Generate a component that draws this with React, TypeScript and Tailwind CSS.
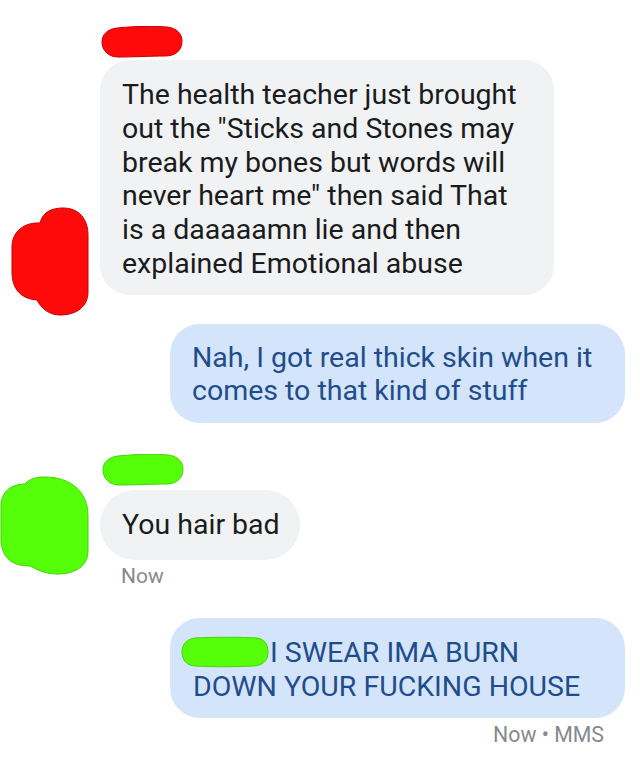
const Blob = ({ d, w, h, fill, stroke }: { d: string; w: number; h: number; fill: string; stroke: string }) => (
  <svg width={w} height={h} viewBox={`0 0 ${w} ${h}`} className="block">
    <path d={d} fill={fill} stroke={stroke} strokeWidth="1" />
  </svg>
);

const RED = "#ff0a0a";
const RED_EDGE = "#c80000";
const GREEN = "#55ff0a";
const GREEN_EDGE = "#44d400";

const NamePill = ({ fill, edge }: { fill: string; edge: string }) => (
  <Blob
    w={82}
    h={32}
    fill={fill}
    stroke={edge}
    d="M16,2 C35,0 55,0 66,1 C76,2 81,8 81,15 C81,24 75,30 64,30 C50,30 35,31 17,31 C7,31 1,24 1,16 C1,8 7,3 16,2 Z"
  />
);

export default function App() {
  return (
    <div className="w-[640px] h-[774px] overflow-hidden bg-white pt-[26px] font-['Roboto','Liberation_Sans',sans-serif] flex flex-col">
      {/* incoming #1 */}
      <div className="flex">
        <div className="w-[100px] shrink-0 relative">
          <div className="absolute left-[11px] top-[181px]">
            <Blob
              w={78}
              h={109}
              fill={RED}
              stroke={RED_EDGE}
              d="M29,16 C32,4 42,1 52,1 C68,1 77,12 77,28 L77,85 C77,100 65,108 49,108 C38,108 30,101 26,93 C12,92 1,84 1,65 L1,40 C1,24 14,15 29,16 Z"
            />
          </div>
        </div>
        <div className="flex flex-col">
          <div className="ml-px">
            <NamePill fill={RED} edge={RED_EDGE} />
          </div>
          <div className="mt-[2px] w-[454px] rounded-[30px] bg-[#f1f2f4] px-[22px] pt-[18px] pb-[14px] text-[28.5px] leading-[33.75px] text-[#1a1b1d] whitespace-nowrap">
            The health teacher just brought
            <br />
            out the "Sticks and Stones may
            <br />
            break my bones but words will
            <br />
            never heart me" then said That
            <br />
            is a daaaaamn lie and then
            <br />
            explained Emotional abuse
          </div>
        </div>
      </div>

      {/* outgoing #1 */}
      <div className="mt-[29px] self-end mr-[15px] w-[455px] rounded-[30px] bg-[#d4e4fa] px-[22px] pt-[17px] pb-[15px] text-[28.5px] leading-[33.75px] text-[#1f4d8c] whitespace-nowrap">
        Nah, I got real thick skin when it
        <br />
        comes to that kind of stuff
      </div>

      {/* incoming #2 */}
      <div className="mt-[31px] flex">
        <div className="w-[100px] shrink-0 relative">
          <div className="absolute left-0 top-[22px]">
            <Blob
              w={89}
              h={99}
              fill={GREEN}
              stroke={GREEN_EDGE}
              d="M25,8 C30,2 38,1 45,1 C70,1 88,15 88,40 L88,75 C88,90 75,98 58,98 C45,98 38,94 30,90 C10,90 1,80 1,62 L1,30 C1,15 12,8 25,8 Z"
            />
          </div>
        </div>
        <div className="flex flex-col items-start">
          <div className="ml-[2px]">
            <NamePill fill={GREEN} edge={GREEN_EDGE} />
          </div>
          <div className="mt-[4px] h-[70px] flex items-center rounded-full bg-[#f1f2f4] pl-[22px] pr-[20px] text-[28.5px] text-[#1a1b1d]">
            You hair bad
          </div>
          <div className="mt-[4px] ml-[21px] text-[21px] leading-[24px] text-[#86898d]">Now</div>
        </div>
      </div>

      {/* outgoing #2 */}
      <div className="mt-[30px] self-end mr-[15px] w-[455px] rounded-[30px] bg-[#d4e4fa] px-[23px] pt-[18px] pb-[14px] text-[28.5px] leading-[33.75px] text-[#1f4d8c] whitespace-nowrap">
        <span className="inline-block align-middle -ml-[12px] -mt-[4px] mr-[1px]">
          <svg width="88" height="32" viewBox="0 0 88 32" className="block">
            <path
              d="M14,2 C35,1 60,1 76,2 C84,3 87,9 87,16 C87,25 81,30 72,30 C52,31 32,31 15,30 C6,30 1,24 1,16 C1,8 6,3 14,2 Z"
              fill={GREEN}
              stroke={GREEN_EDGE}
              strokeWidth="1"
            />
          </svg>
        </span>
        I SWEAR IMA BURN
        <br />
        DOWN YOUR FUCKING HOUSE
      </div>
      <div className="mt-[5px] self-end mr-[36px] text-[21.3px] leading-[24px] text-[#86898d]">Now • MMS</div>
    </div>
  );
}
